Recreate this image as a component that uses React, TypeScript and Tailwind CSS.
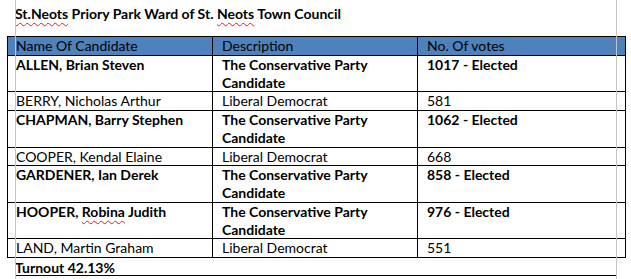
import React from 'react';

type Row = {
  name: React.ReactNode;
  desc: string;
  votes: string;
  elected: boolean;
};

const Squiggle: React.FC<{ children: React.ReactNode }> = ({ children }) => (
  <span className="underline decoration-wavy decoration-[#e02020] decoration-1 underline-offset-[3px]">
    {children}
  </span>
);

const ROWS: Row[] = [
  { name: 'ALLEN, Brian Steven', desc: 'The Conservative Party Candidate', votes: '1017 - Elected', elected: true },
  { name: 'BERRY, Nicholas Arthur', desc: 'Liberal Democrat', votes: '581', elected: false },
  { name: 'CHAPMAN, Barry Stephen', desc: 'The Conservative Party Candidate', votes: '1062 - Elected', elected: true },
  { name: 'COOPER, Kendal Elaine', desc: 'Liberal Democrat', votes: '668', elected: false },
  { name: 'GARDENER, Ian Derek', desc: 'The Conservative Party Candidate', votes: '858 - Elected', elected: true },
  {
    name: (
      <>
        HOOPER, <Squiggle>Robina</Squiggle> Judith
      </>
    ),
    desc: 'The Conservative Party Candidate',
    votes: '976 - Elected',
    elected: true,
  },
  { name: 'LAND, Martin Graham', desc: 'Liberal Democrat', votes: '551', elected: false },
];

const App: React.FC = () => {
  return (
    <div className="relative w-[631px] h-[279px] overflow-hidden bg-white text-black font-['Lato','Liberation_Sans',sans-serif] text-[14px] leading-[17.75px]">
      {/* Word text-boundary guides */}
      <div className="absolute left-[15px] top-0 bottom-0 w-px bg-[#c4c4c4] z-10" />
      <div className="absolute left-[616px] top-0 bottom-0 w-px bg-[#c4c4c4] z-10" />

      <div className="pl-[15px] pt-[5px] h-[36px] font-bold">
        <Squiggle>St.Neots</Squiggle> Priory Park Ward of St. <Squiggle>Neots</Squiggle> Town Council
      </div>

      <table className="ml-[7px] w-[618px] table-fixed border-collapse">
        <colgroup>
          <col className="w-[205px]" />
          <col className="w-[205px]" />
          <col className="w-[208px]" />
        </colgroup>
        <thead>
          <tr className="bg-[#4f81bd]">
            <th className="border border-black px-[8px] py-0 text-left font-normal">Name Of Candidate</th>
            <th className="border border-black px-[9px] py-0 text-left font-normal">Description</th>
            <th className="border border-black px-[9px] py-0 text-left font-normal">No. Of votes</th>
          </tr>
        </thead>
        <tbody>
          {ROWS.map((r, i) => (
            <tr key={i} className={r.elected ? 'font-bold' : ''}>
              <td className="border border-black px-[8px] py-0 align-top">{r.name}</td>
              <td className="border border-black px-[9px] py-0 align-top">
                {r.elected ? (
                  <>
                    The Conservative Party
                    <br />
                    Candidate
                  </>
                ) : (
                  r.desc
                )}
              </td>
              <td className="border border-black px-[9px] py-0 align-top">{r.votes}</td>
            </tr>
          ))}
        </tbody>
      </table>

      <div className="ml-[15px] w-[602px] pt-[1px] h-[18px] border-b border-black font-bold">Turnout 42.13%</div>
    </div>
  );
};

export default App;
